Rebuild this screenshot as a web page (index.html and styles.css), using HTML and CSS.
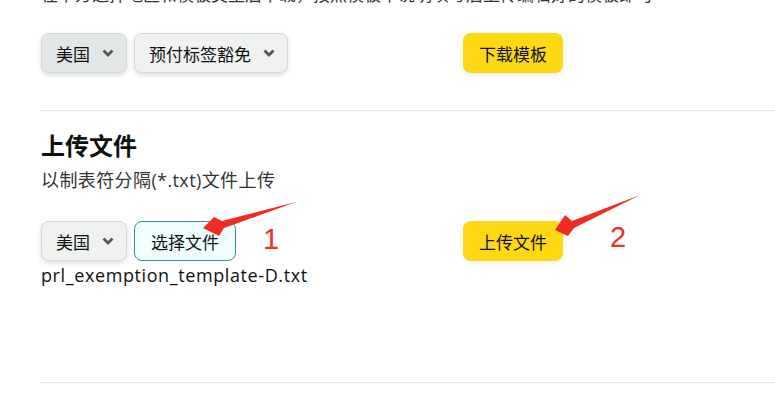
FILE: index.html
```html
<!DOCTYPE html>
<html lang="zh-CN">
<head>
  <meta charset="UTF-8">
  <title>上传文件</title>
  <link rel="stylesheet" href="styles.css">
</head>
<body>

<div class="page">
  <div class="section">
    <p class="intro">在下方选择地区和模板类型后下载，按照模板中说明填写后上传编辑好的模板即可</p>
    <div class="row">
      <div class="group">
        <div class="select active">美国 <svg class="chev" viewBox="0 0 12 8"><path d="M1.5 1.5 6 6l4.5-4.5"/></svg></div>
        <div class="select">预付标签豁免 <svg class="chev" viewBox="0 0 12 8"><path d="M1.5 1.5 6 6l4.5-4.5"/></svg></div>
      </div>
      <div class="btn">下载模板</div>
    </div>
  </div>

  <div class="section upload">
    <h2>上传文件</h2>
    <p class="desc">以制表符分隔(*.txt)文件上传</p>
    <div class="row">
      <div class="group">
        <div class="select">美国 <svg class="chev" viewBox="0 0 12 8"><path d="M1.5 1.5 6 6l4.5-4.5"/></svg></div>
        <div class="file">选择文件</div>
      </div>
      <div class="btn">上传文件</div>
    </div>
    <p class="filename">prl_exemption_template-D.txt</p>
  </div>
</div>

<svg class="marks" width="775" height="396" viewBox="0 0 775 396">
  <polygon points="203,228 214,217 222,221 296,202 224,228 219,236"/>
  <polygon points="555,230 565,215 572,221 640,195 574,228 568,236"/>
  <text x="263" y="249">1</text>
  <text x="610" y="247">2</text>
</svg>

</body>
</html>
```

FILE: styles.css
```css
body { margin: 0; font-family: "Open Sans", "Noto Sans CJK SC", sans-serif; color: #0f1111; background: #fff; overflow: hidden; }
.page { margin-left: 41px; }
.section { border-bottom: 1px solid #e7e7e7; padding-bottom: 37px; }
.intro { margin: -17px 0 0; font-size: 17px; line-height: 24px; white-space: nowrap; color: #333; }
.row { display: grid; grid-template-columns: 422px auto; align-items: center; margin-top: 26px; }
.group { display: flex; gap: 7px; }
.select { display: flex; align-items: center; gap: 12px; height: 38px; padding: 0 12px 0 14px; border: 1px solid #d5d9d9; border-radius: 8px; background: #f0f2f2; box-shadow: 0 2px 5px rgba(15, 17, 17, .15); font-size: 17px; }
.select.active { background: #e3e6e6; }
.chev { width: 12px; height: 8px; fill: none; stroke: #555; stroke-width: 2.8; }
.file { display: flex; align-items: center; height: 38px; padding: 0 16px; border: 1px solid #3c8b92; border-radius: 8px; background: #f0fdfd; font-size: 17px; }
.btn { justify-self: start; display: flex; align-items: center; height: 40px; padding: 0 16px; border-radius: 8px; background: #ffd814; box-shadow: 0 2px 5px rgba(213, 217, 217, .5); font-size: 17px; }
.upload { padding-top: 20px; height: 272px; box-sizing: border-box; padding-bottom: 0; }
.upload h2 { margin: 0; font-size: 24px; line-height: 30px; font-weight: 700; }
.desc { margin: 7px 0 0; font-size: 18px; line-height: 24px; letter-spacing: 0.4px; color: #333; }
.upload .row { margin-top: 29px; }
.filename { margin: 2px 0 0; font-size: 18px; line-height: 24px; letter-spacing: 0.6px; }
.marks { position: absolute; left: 0; top: 0; pointer-events: none; }
.marks polygon { fill: #ef2b22; }
.marks text { fill: #e9322b; font-family: "Liberation Sans", sans-serif; font-size: 29px; }
```
